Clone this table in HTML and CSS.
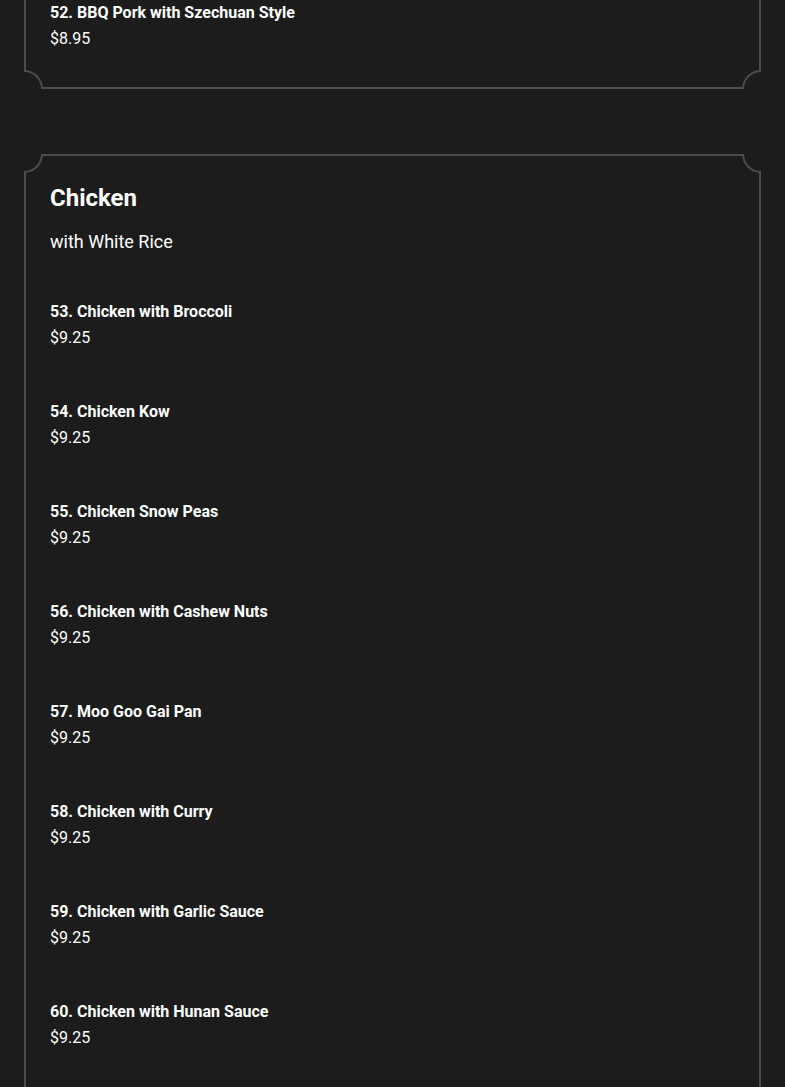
FILE: index.html
```html
<!DOCTYPE html>
<html>
<head>
<meta charset="utf-8">
<link rel="stylesheet" href="styles.css">
</head>
<body>
<main class="menu">
  <section class="card card-prev">
    <span class="corner bl"></span><span class="corner br"></span>
    <ul class="items">
      <li class="item"><div class="name">52. BBQ Pork with Szechuan Style</div><div class="price">$8.95</div></li>
    </ul>
  </section>
  <section class="card">
    <span class="corner tl"></span><span class="corner tr"></span>
    <span class="corner bl"></span><span class="corner br"></span>
    <h2 class="title">Chicken</h2>
    <p class="subtitle">with White Rice</p>
    <ul class="items">
      <li class="item"><div class="name">53. Chicken with Broccoli</div><div class="price">$9.25</div></li>
      <li class="item"><div class="name">54. Chicken Kow</div><div class="price">$9.25</div></li>
      <li class="item"><div class="name">55. Chicken Snow Peas</div><div class="price">$9.25</div></li>
      <li class="item"><div class="name">56. Chicken with Cashew Nuts</div><div class="price">$9.25</div></li>
      <li class="item"><div class="name">57. Moo Goo Gai Pan</div><div class="price">$9.25</div></li>
      <li class="item"><div class="name">58. Chicken with Curry</div><div class="price">$9.25</div></li>
      <li class="item"><div class="name">59. Chicken with Garlic Sauce</div><div class="price">$9.25</div></li>
      <li class="item"><div class="name">60. Chicken with Hunan Sauce</div><div class="price">$9.25</div></li>
      <li class="item"><div class="name">61. Chicken with Mixed Vegetables</div><div class="price">$9.25</div></li>
    </ul>
  </section>
</main>
</body>
</html>
```
FILE: styles.css
```css
html, body {
  margin: 0;
  padding: 0;
  background: #1c1c1c;
}
body {
  font-family: Roboto, "Liberation Sans", sans-serif;
  color: #ffffff;
  overflow: hidden;
}
.menu {
  display: flex;
  flex-direction: column;
  gap: 65px;
  padding: 0 24px;
}
.card {
  position: relative;
  border: 2px solid #4c4c4c;
  padding: 25px 24px 35px;
}
.card-prev {
  border-top: none;
  padding-top: 0;
}
.corner {
  position: absolute;
  width: 17px;
  height: 17px;
  border: 0 solid #4c4c4c;
  background: #1c1c1c;
}
.corner.tl {
  top: -2px; left: -2px;
  border-right-width: 2px; border-bottom-width: 2px;
  border-bottom-right-radius: 19px;
}
.corner.tr {
  top: -2px; right: -2px;
  border-left-width: 2px; border-bottom-width: 2px;
  border-bottom-left-radius: 19px;
}
.corner.bl {
  bottom: -2px; left: -2px;
  border-right-width: 2px; border-top-width: 2px;
  border-top-right-radius: 19px;
}
.corner.br {
  bottom: -2px; right: -2px;
  border-left-width: 2px; border-top-width: 2px;
  border-top-left-radius: 19px;
}
.title {
  margin: 0;
  font-size: 24px;
  line-height: 34px;
  font-weight: 700;
}
.subtitle {
  margin: 13px 0 0;
  font-size: 18px;
  line-height: 28px;
  font-weight: 400;
}
.items {
  list-style: none;
  margin: 43px 0 0;
  padding: 0;
  display: flex;
  flex-direction: column;
  gap: 48px;
}
.card-prev .items { margin-top: 0; }
.name {
  font-size: 16px;
  line-height: 26px;
  font-weight: 700;
}
.price {
  font-size: 16px;
  line-height: 26px;
  font-weight: 400;
}
```
